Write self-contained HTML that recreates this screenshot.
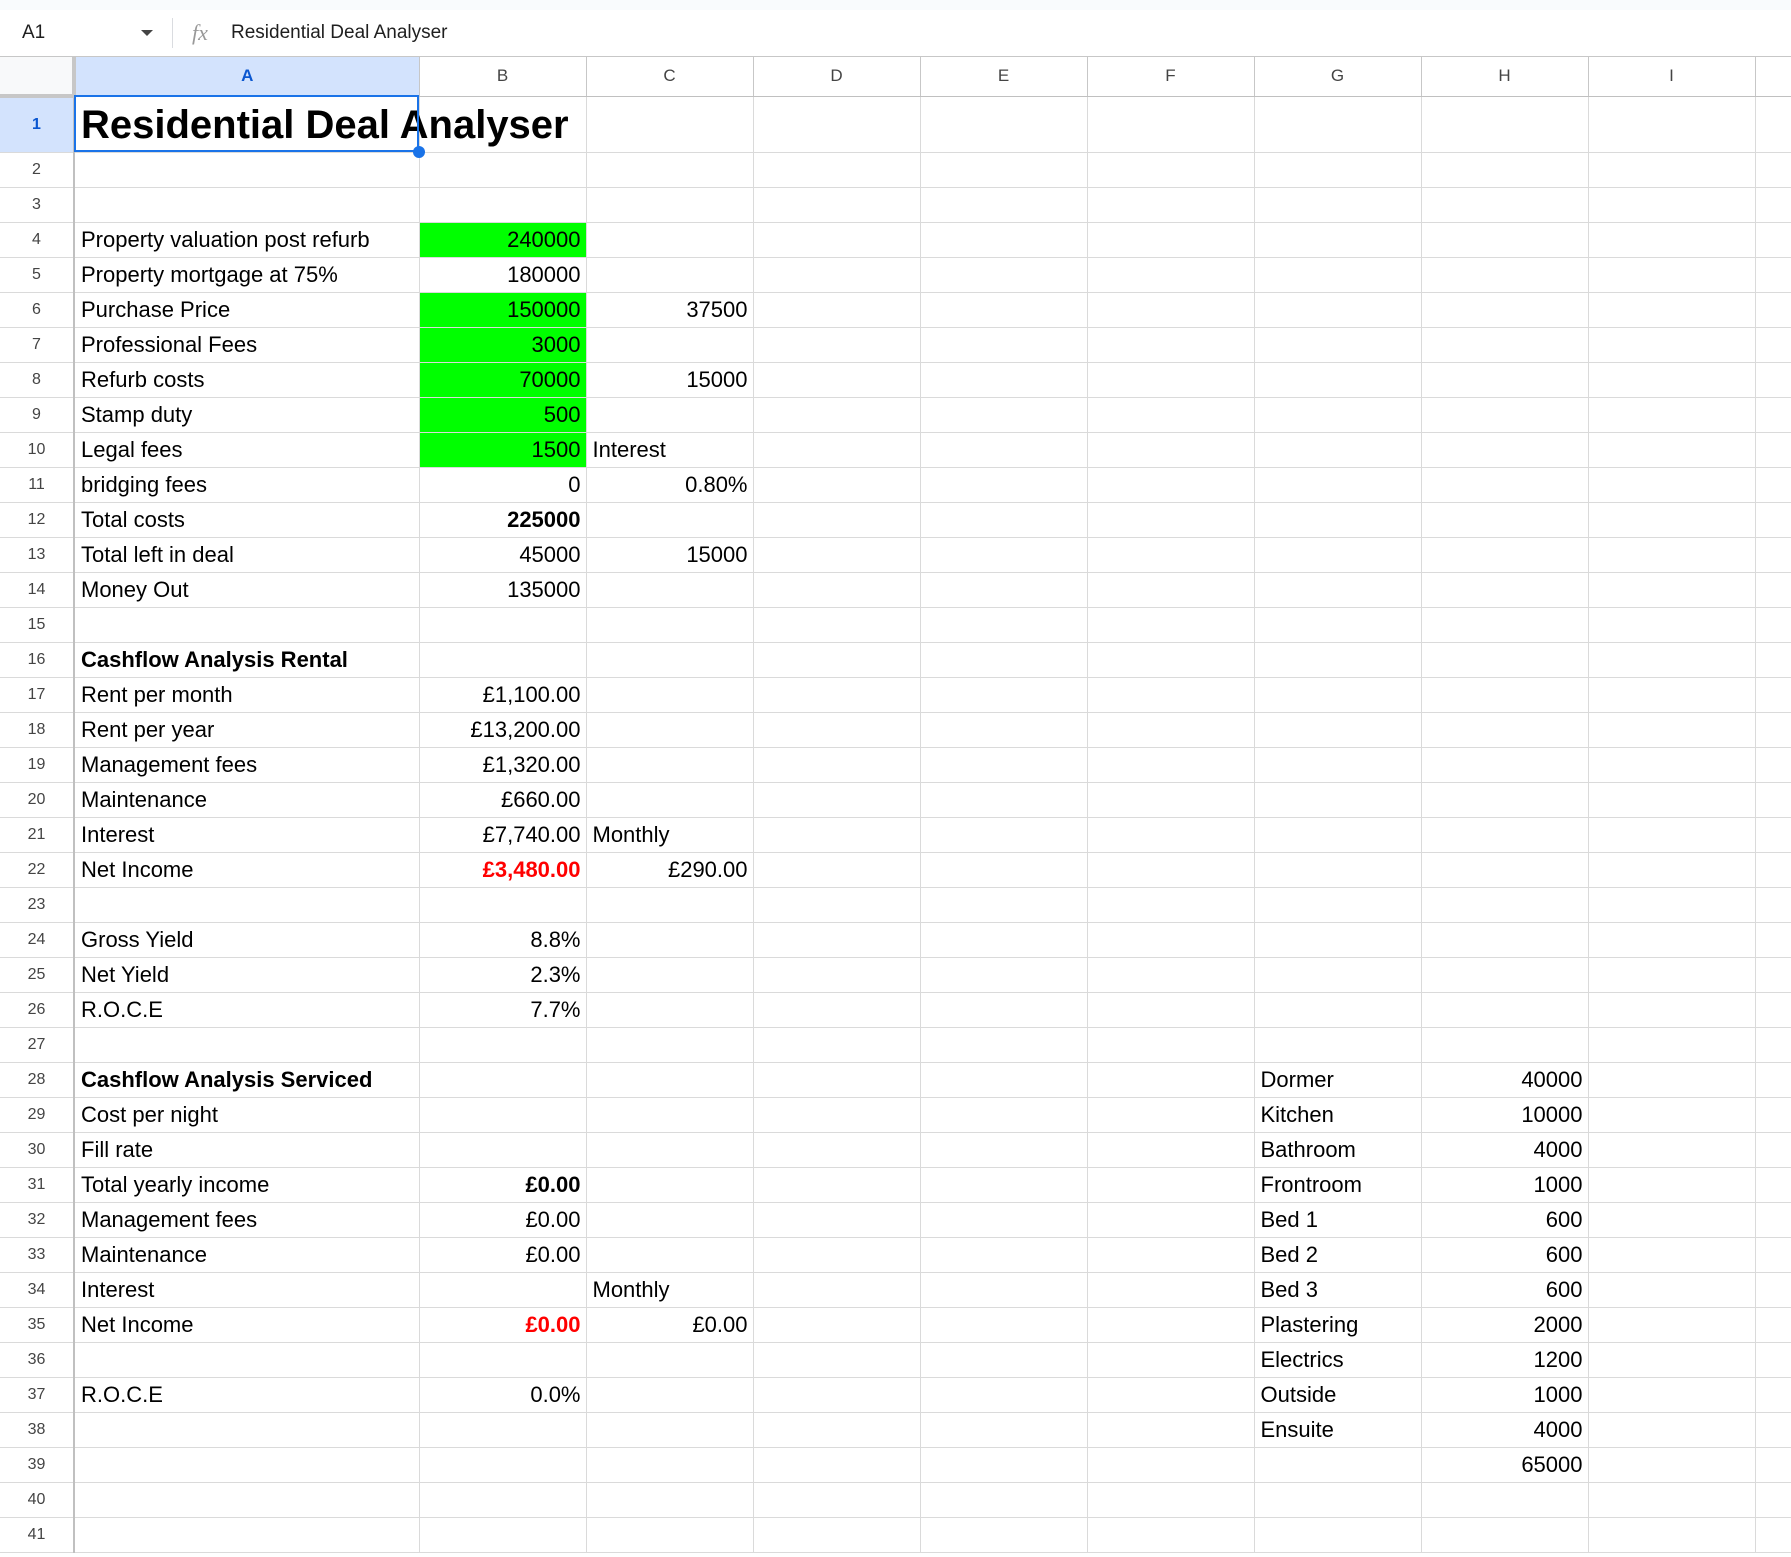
<!DOCTYPE html>
<html><head><meta charset="utf-8"><style>
body{margin:0;width:1791px;height:1557px;overflow:hidden;background:#fff;font-family:"Liberation Sans",Arial,sans-serif;position:relative}
.top{position:absolute;left:0;top:0;width:1791px;height:10px;background:#f9fbfd}
.fbar{position:absolute;left:0;top:10px;width:1791px;height:46px;border-bottom:1px solid #c7c7c7;background:#fff}
.fbar .nm{position:absolute;left:22px;top:12px;font-size:19px;color:#1f1f1f}
.fbar .dd{position:absolute;left:141px;top:20px;width:0;height:0;border-left:6px solid transparent;border-right:6px solid transparent;border-top:6px solid #444}
.fbar .sep{position:absolute;left:172px;top:8px;width:1px;height:30px;background:#dadce0}
.fbar .fx{position:absolute;left:192px;top:10px;font-size:22px;font-style:italic;font-family:"Liberation Serif",serif;color:#999}
.fbar .ft{position:absolute;left:231px;top:12px;font-size:19px;color:#1f1f1f}
table{position:absolute;left:0;top:57px;border-collapse:collapse;table-layout:fixed;width:1791px}
td{box-sizing:border-box;border-right:1px solid #dadada;border-bottom:1px solid #dadada;height:35px;line-height:20px;padding:0 5px 0 6px;font-size:22px;color:#000;white-space:nowrap;overflow:visible}
tr.h td{height:39px;text-align:center;font-size:17px;color:#444;border-bottom:1px solid #c0c0c0;border-right:1px solid #c7c7c7;padding:0}
td.rn{text-align:center;font-size:16px;color:#444;border-right:2px solid #c0c0c0;padding:0}
.r{text-align:right}.b{font-weight:bold}.g{background:#00ff00}.red{color:#ff0000;font-weight:bold}
.sel{background:#d3e3fd !important;color:#0b57d0 !important;font-weight:bold}
tr.t td{height:56px}
.title{font-size:40px;font-weight:bold;overflow:visible;position:relative}
.box{position:absolute;left:74px;top:95px;width:345px;height:57px;border:2px solid #1a73e8;box-sizing:border-box;pointer-events:none}
.dot{position:absolute;left:413px;top:146px;width:12px;height:12px;border-radius:50%;background:#1a73e8}
</style></head><body>
<div class="top"></div>
<div class="fbar"><span class="nm">A1</span><span class="dd"></span><span class="sep"></span><span class="fx">fx</span><span class="ft">Residential Deal Analyser</span></div>
<table>
<colgroup><col style="width:74px"><col style="width:345px"><col style="width:167px"><col style="width:167px"><col style="width:167px"><col style="width:167px"><col style="width:167px"><col style="width:167px"><col style="width:167px"><col style="width:167px"><col style="width:203px"></colgroup>
<tr class="h"><td style="background:#f8f9fa;border-right:4px solid #c7c7c7;border-bottom:4px solid #c7c7c7"></td><td class="sel">A</td><td>B</td><td>C</td><td>D</td><td>E</td><td>F</td><td>G</td><td>H</td><td>I</td><td></td></tr>
<tr class="t"><td class="rn sel">1</td><td class="title"><span style="position:absolute;left:6px;top:6px;line-height:44px">Residential Deal Analyser</span></td><td></td><td></td><td></td><td></td><td></td><td></td><td></td><td></td><td></td></tr>
<tr><td class="rn">2</td><td></td><td></td><td></td><td></td><td></td><td></td><td></td><td></td><td></td><td></td></tr>
<tr><td class="rn">3</td><td></td><td></td><td></td><td></td><td></td><td></td><td></td><td></td><td></td><td></td></tr>
<tr><td class="rn">4</td><td>Property valuation post refurb</td><td class="r g">240000</td><td></td><td></td><td></td><td></td><td></td><td></td><td></td><td></td></tr>
<tr><td class="rn">5</td><td>Property mortgage at 75%</td><td class="r">180000</td><td></td><td></td><td></td><td></td><td></td><td></td><td></td><td></td></tr>
<tr><td class="rn">6</td><td>Purchase Price</td><td class="r g">150000</td><td class="r">37500</td><td></td><td></td><td></td><td></td><td></td><td></td><td></td></tr>
<tr><td class="rn">7</td><td>Professional Fees</td><td class="r g">3000</td><td></td><td></td><td></td><td></td><td></td><td></td><td></td><td></td></tr>
<tr><td class="rn">8</td><td>Refurb costs</td><td class="r g">70000</td><td class="r">15000</td><td></td><td></td><td></td><td></td><td></td><td></td><td></td></tr>
<tr><td class="rn">9</td><td>Stamp duty</td><td class="r g">500</td><td></td><td></td><td></td><td></td><td></td><td></td><td></td><td></td></tr>
<tr><td class="rn">10</td><td>Legal fees</td><td class="r g">1500</td><td>Interest</td><td></td><td></td><td></td><td></td><td></td><td></td><td></td></tr>
<tr><td class="rn">11</td><td>bridging fees</td><td class="r">0</td><td class="r">0.80%</td><td></td><td></td><td></td><td></td><td></td><td></td><td></td></tr>
<tr><td class="rn">12</td><td>Total costs</td><td class="r b">225000</td><td></td><td></td><td></td><td></td><td></td><td></td><td></td><td></td></tr>
<tr><td class="rn">13</td><td>Total left in deal</td><td class="r">45000</td><td class="r">15000</td><td></td><td></td><td></td><td></td><td></td><td></td><td></td></tr>
<tr><td class="rn">14</td><td>Money Out</td><td class="r">135000</td><td></td><td></td><td></td><td></td><td></td><td></td><td></td><td></td></tr>
<tr><td class="rn">15</td><td></td><td></td><td></td><td></td><td></td><td></td><td></td><td></td><td></td><td></td></tr>
<tr><td class="rn">16</td><td class="b">Cashflow Analysis Rental</td><td></td><td></td><td></td><td></td><td></td><td></td><td></td><td></td><td></td></tr>
<tr><td class="rn">17</td><td>Rent per month</td><td class="r">£1,100.00</td><td></td><td></td><td></td><td></td><td></td><td></td><td></td><td></td></tr>
<tr><td class="rn">18</td><td>Rent per year</td><td class="r">£13,200.00</td><td></td><td></td><td></td><td></td><td></td><td></td><td></td><td></td></tr>
<tr><td class="rn">19</td><td>Management fees</td><td class="r">£1,320.00</td><td></td><td></td><td></td><td></td><td></td><td></td><td></td><td></td></tr>
<tr><td class="rn">20</td><td>Maintenance</td><td class="r">£660.00</td><td></td><td></td><td></td><td></td><td></td><td></td><td></td><td></td></tr>
<tr><td class="rn">21</td><td>Interest</td><td class="r">£7,740.00</td><td>Monthly</td><td></td><td></td><td></td><td></td><td></td><td></td><td></td></tr>
<tr><td class="rn">22</td><td>Net Income</td><td class="r red">£3,480.00</td><td class="r">£290.00</td><td></td><td></td><td></td><td></td><td></td><td></td><td></td></tr>
<tr><td class="rn">23</td><td></td><td></td><td></td><td></td><td></td><td></td><td></td><td></td><td></td><td></td></tr>
<tr><td class="rn">24</td><td>Gross Yield</td><td class="r">8.8%</td><td></td><td></td><td></td><td></td><td></td><td></td><td></td><td></td></tr>
<tr><td class="rn">25</td><td>Net Yield</td><td class="r">2.3%</td><td></td><td></td><td></td><td></td><td></td><td></td><td></td><td></td></tr>
<tr><td class="rn">26</td><td>R.O.C.E</td><td class="r">7.7%</td><td></td><td></td><td></td><td></td><td></td><td></td><td></td><td></td></tr>
<tr><td class="rn">27</td><td></td><td></td><td></td><td></td><td></td><td></td><td></td><td></td><td></td><td></td></tr>
<tr><td class="rn">28</td><td class="b">Cashflow Analysis Serviced</td><td></td><td></td><td></td><td></td><td></td><td>Dormer</td><td class="r">40000</td><td></td><td></td></tr>
<tr><td class="rn">29</td><td>Cost per night</td><td></td><td></td><td></td><td></td><td></td><td>Kitchen</td><td class="r">10000</td><td></td><td></td></tr>
<tr><td class="rn">30</td><td>Fill rate</td><td></td><td></td><td></td><td></td><td></td><td>Bathroom</td><td class="r">4000</td><td></td><td></td></tr>
<tr><td class="rn">31</td><td>Total yearly income</td><td class="r b">£0.00</td><td></td><td></td><td></td><td></td><td>Frontroom</td><td class="r">1000</td><td></td><td></td></tr>
<tr><td class="rn">32</td><td>Management fees</td><td class="r">£0.00</td><td></td><td></td><td></td><td></td><td>Bed 1</td><td class="r">600</td><td></td><td></td></tr>
<tr><td class="rn">33</td><td>Maintenance</td><td class="r">£0.00</td><td></td><td></td><td></td><td></td><td>Bed 2</td><td class="r">600</td><td></td><td></td></tr>
<tr><td class="rn">34</td><td>Interest</td><td></td><td>Monthly</td><td></td><td></td><td></td><td>Bed 3</td><td class="r">600</td><td></td><td></td></tr>
<tr><td class="rn">35</td><td>Net Income</td><td class="r red">£0.00</td><td class="r">£0.00</td><td></td><td></td><td></td><td>Plastering</td><td class="r">2000</td><td></td><td></td></tr>
<tr><td class="rn">36</td><td></td><td></td><td></td><td></td><td></td><td></td><td>Electrics</td><td class="r">1200</td><td></td><td></td></tr>
<tr><td class="rn">37</td><td>R.O.C.E</td><td class="r">0.0%</td><td></td><td></td><td></td><td></td><td>Outside</td><td class="r">1000</td><td></td><td></td></tr>
<tr><td class="rn">38</td><td></td><td></td><td></td><td></td><td></td><td></td><td>Ensuite</td><td class="r">4000</td><td></td><td></td></tr>
<tr><td class="rn">39</td><td></td><td></td><td></td><td></td><td></td><td></td><td></td><td class="r">65000</td><td></td><td></td></tr>
<tr><td class="rn">40</td><td></td><td></td><td></td><td></td><td></td><td></td><td></td><td></td><td></td><td></td></tr>
<tr><td class="rn">41</td><td></td><td></td><td></td><td></td><td></td><td></td><td></td><td></td><td></td><td></td></tr>
</table>
<div class="box"></div><div class="dot"></div>
</body></html>
